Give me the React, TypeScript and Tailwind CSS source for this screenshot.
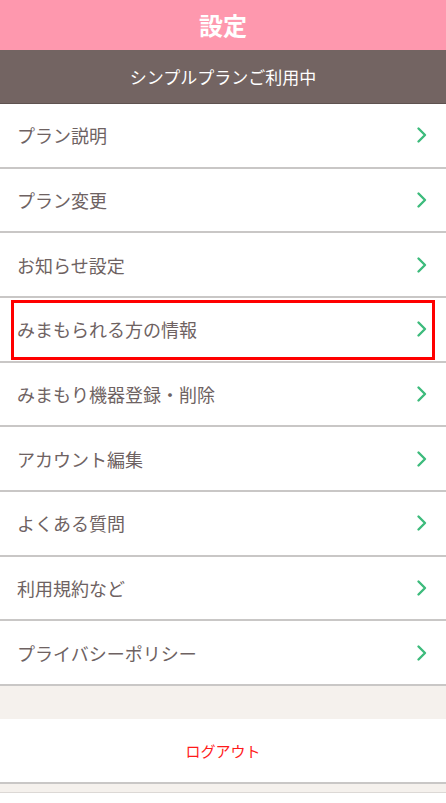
import React from "react";

const items = [
  "プラン説明",
  "プラン変更",
  "お知らせ設定",
  "みまもられる方の情報",
  "みまもり機器登録・削除",
  "アカウント編集",
  "よくある質問",
  "利用規約など",
  "プライバシーポリシー",
];

function Chevron() {
  return (
    <svg width="12" height="18" viewBox="0 0 12 18" fill="none">
      <path d="M2.5 2.5 L9 9 L2.5 15.5" stroke="#3dbb7c" strokeWidth="2.4" strokeLinecap="round" strokeLinejoin="round" />
    </svg>
  );
}

export default function App() {
  return (
    <div
      className="w-[446px] h-[803px] overflow-hidden bg-white flex flex-col"
      style={{ fontFamily: '"Noto Sans CJK JP", "Noto Sans", sans-serif' }}
    >
      <div className="h-[50px] bg-[#fe98ae] flex items-center justify-center">
        <span className="text-white text-[24px] font-bold leading-none">設定</span>
      </div>
      <div className="h-[54px] bg-[#736462] border-b border-[#5e5250] flex items-center justify-center">
        <span className="text-white text-[17px] leading-none">シンプルプランご利用中</span>
      </div>
      {items.map((t, i) => (
        <div
          key={t}
          className="relative h-[64.67px] shrink-0 border-b-[2px] border-[#c9c7c6] flex items-center justify-between pl-[17px] pr-[18px]"
        >
          <span className="text-[#6e6262] text-[18px] leading-none">{t}</span>
          <Chevron />
          {i === 3 && (
            <div className="absolute left-[11px] right-[11px] top-[2px] bottom-[1px] border-[3px] border-[#ff0000]" />
          )}
        </div>
      ))}
      <div className="h-[33px] shrink-0 bg-[#f5f1ed]" />
      <div className="h-[63px] shrink-0 flex items-center justify-center">
        <span className="text-[#ff1a1a] text-[15px] leading-none">ログアウト</span>
      </div>
      <div className="h-[2px] shrink-0 bg-[#c9c7c6]" />
      <div className="h-[8px] shrink-0 bg-[#f5f1ed]" />
      <div className="h-[1px] shrink-0 bg-[#dcd8d5]" />
      <div className="flex-1 bg-white" />
    </div>
  );
}
